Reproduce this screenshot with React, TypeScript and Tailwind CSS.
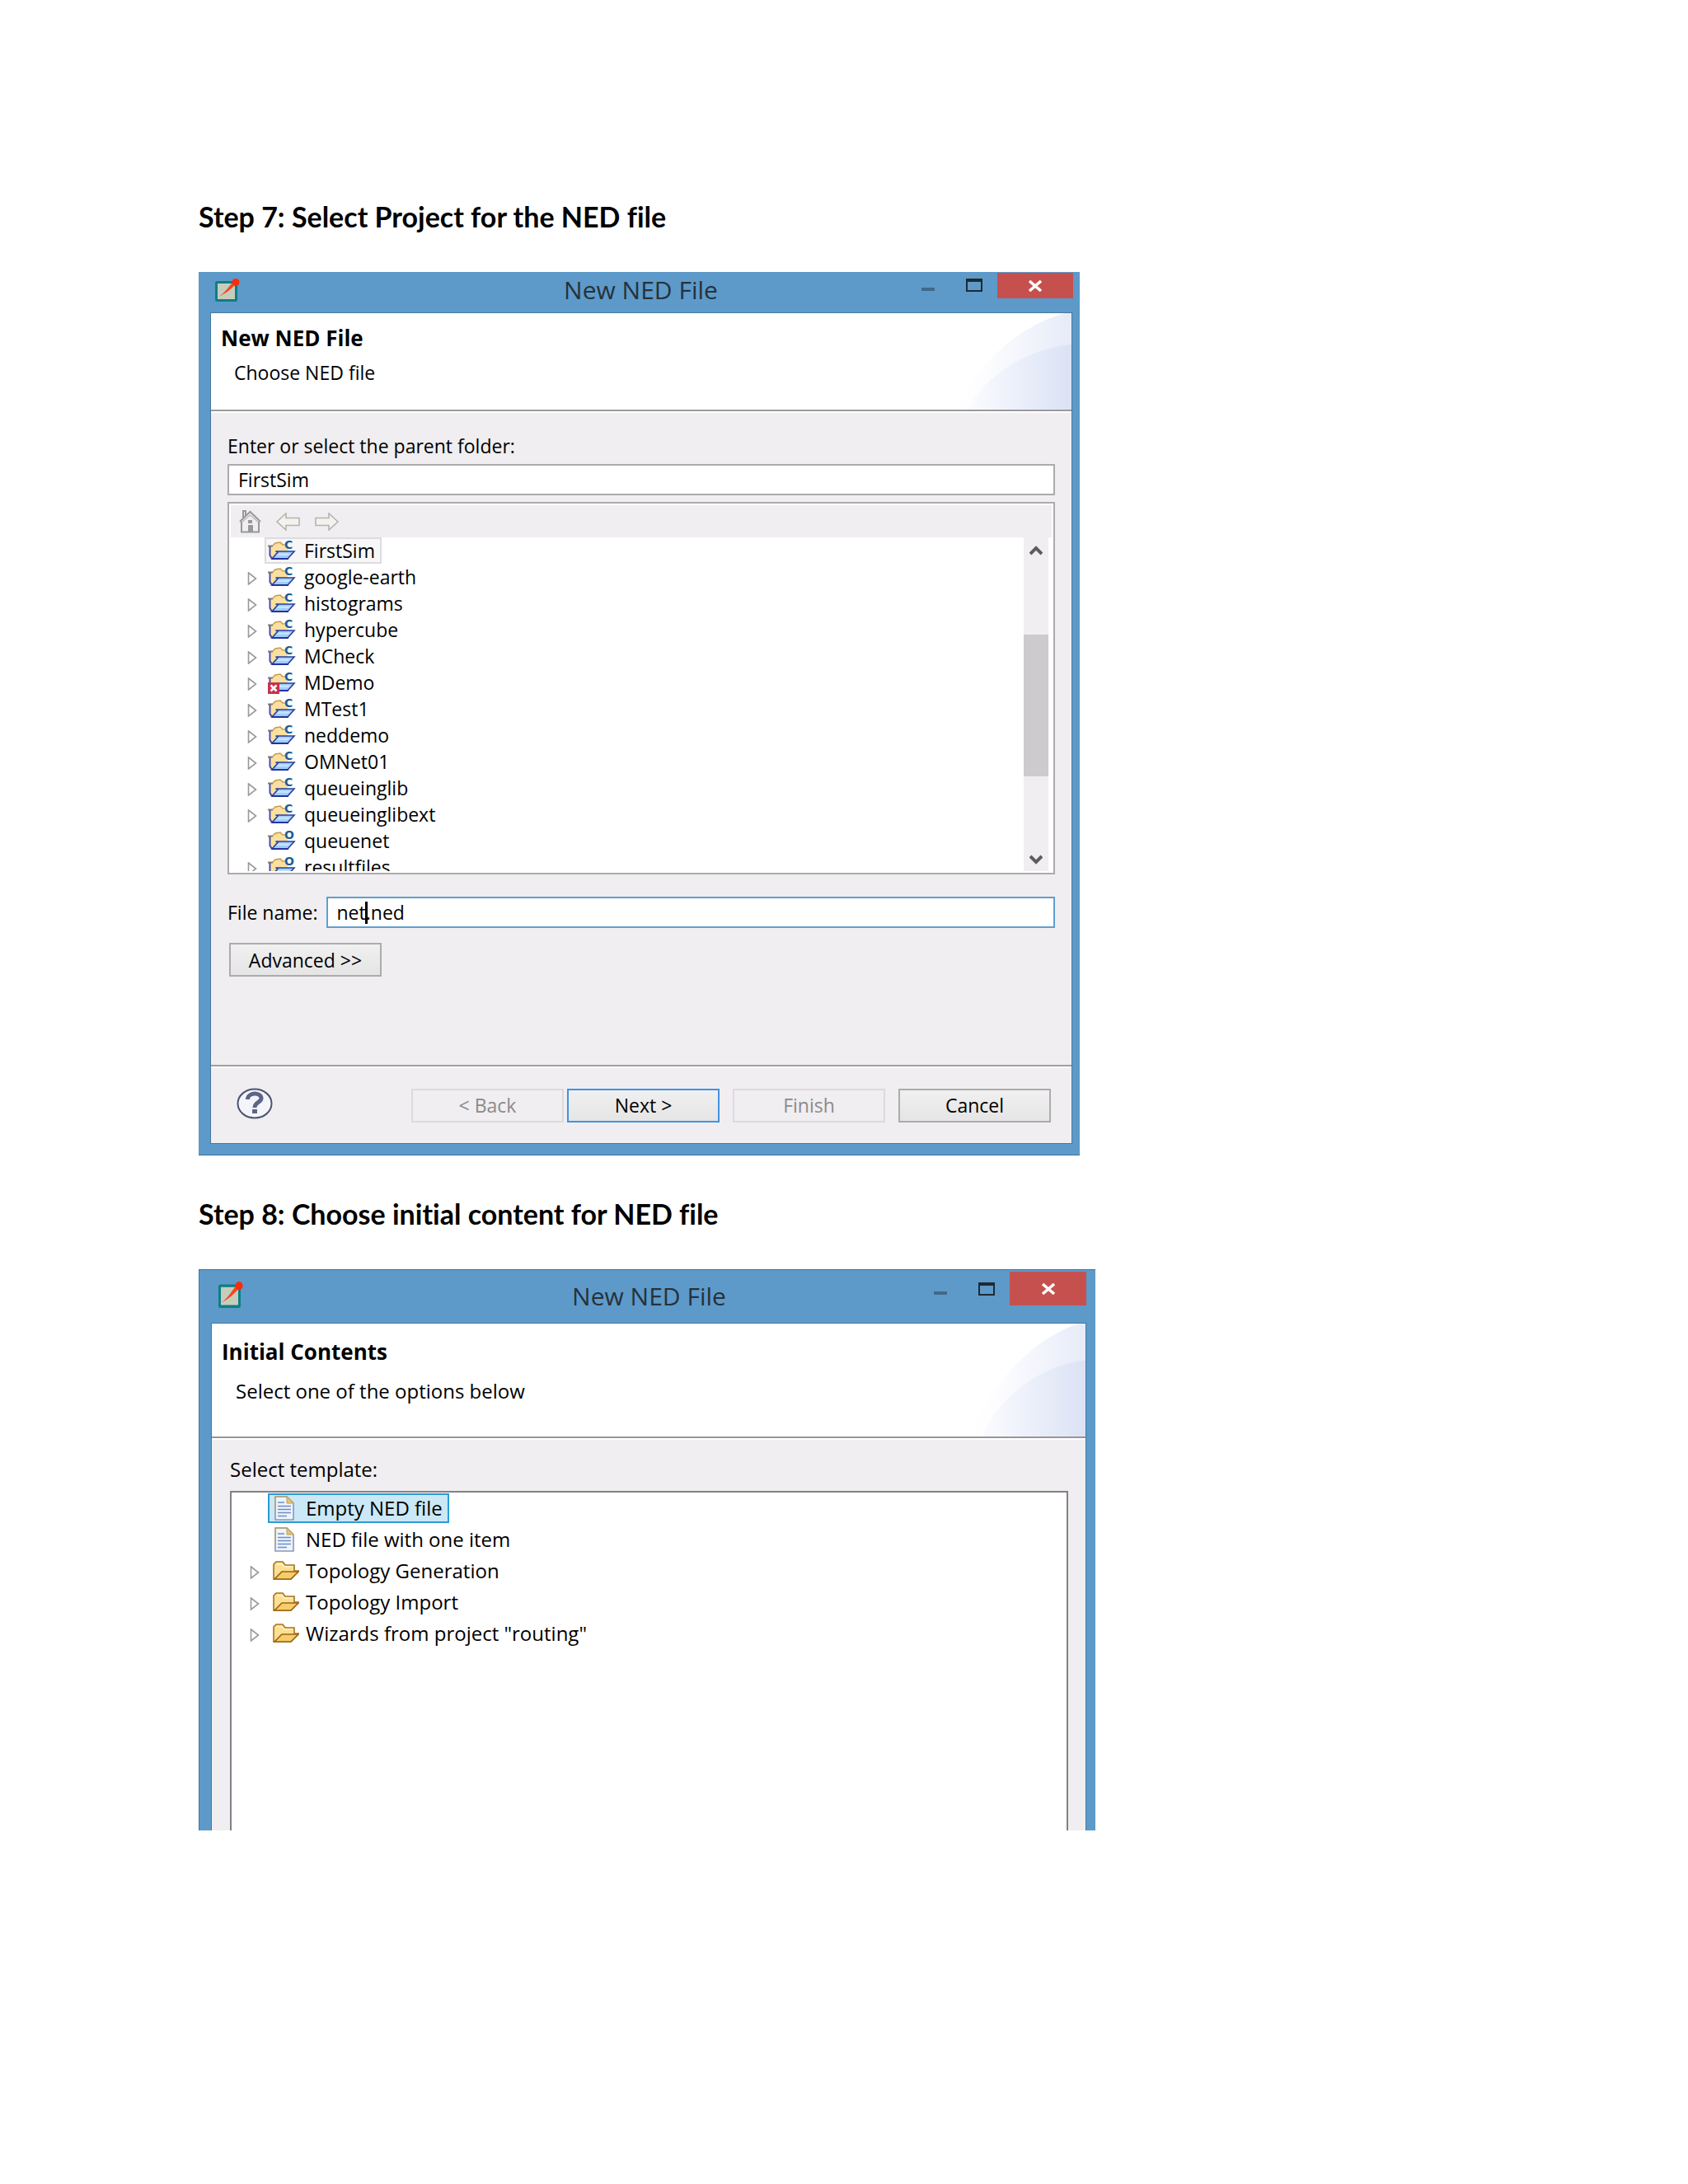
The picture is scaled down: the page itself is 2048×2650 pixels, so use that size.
import React from "react";

function PinIcon({ className }: { className: string }) {
  return (
    <svg className={className} viewBox="0 0 30 28" preserveAspectRatio="none" aria-hidden="true">
      <rect x="1.5" y="4.5" width="24" height="22" rx="1" fill="#c6cdbd" stroke="#0d7f84" strokeWidth="3" />
      <path d="M4 22 C11 18 15 12 20 6 L24 8 C19 13 13 18 4 22Z" fill="#f4471f" />
      <circle cx="25" cy="4.500" r="4.500" fill="#fb2a0c" />
    </svg>
  );
}

function HeaderSwoosh({ id }: { id: string }) {
  return (
    <svg className="absolute right-0 top-0 h-full w-[150px]" viewBox="0 0 150 117" preserveAspectRatio="none" aria-hidden="true">
      <defs>
        <linearGradient id={id + "-outer"} x1="0" x2="1" y1="0" y2="0">
          <stop offset="0" stopColor="#ffffff" />
          <stop offset="0.25" stopColor="#fdfdff" />
          <stop offset="0.65" stopColor="#f2f4fc" />
          <stop offset="1" stopColor="#e6ebf8" />
        </linearGradient>
        <linearGradient id={id + "-inner"} x1="0" x2="1" y1="0" y2="0">
          <stop offset="0" stopColor="#fcfcff" />
          <stop offset="0.5" stopColor="#ebeffa" />
          <stop offset="1" stopColor="#dbe2f5" />
        </linearGradient>
      </defs>
      <path d="M8 117 C36 62 86 15 142 0 H150 V117Z" fill={"url(#" + id + "-outer)"} />
      <path d="M24 117 C44 77 95 43 150 38 V117Z" fill={"url(#" + id + "-inner)"} />
    </svg>
  );
}

function ProjectIcon({ letter, error }: { letter: string; error?: boolean }) {
  return (
    <svg className="h-6 w-[34px] shrink-0 overflow-visible" viewBox="0 0 34 24" aria-hidden="true">
      <path d="M4 7 L7 6 L9 3 L16 2 L19 6 L24 7 V14 L10 15 L4 22Z" fill="#fae0a0" />
      <path d="M6 6 L9 3 L15 2 L18 5 H22" fill="none" stroke="#c79a4a" strokeWidth="1.500" />
      <path d="M0 6.500 H6" stroke="#8b7b66" strokeWidth="2" />
      <path d="M2.500 7 V18 L5 22" fill="none" stroke="#4a4a8c" strokeWidth="2" />
      <path d="M9.500 13 H32 L24 22 H5 L12 14Z" fill="#9fcdfb" stroke="#2b3f9e" strokeWidth="1.600" />
      <path d="M13 15.500 H28 L25 18 H10Z" fill="#c7e3ff" />
      <path d="M5 22 H25" stroke="#2433a0" strokeWidth="2" />
      <text x="20" y="10" fill="#1d5d92" fontFamily="DejaVu Sans" fontWeight="700" fontSize="14">
        {letter}
      </text>
      {error && (
        <g>
          <rect x="0" y="12" width="14" height="14" fill="#c8324c" />
          <path d="M3.500 15.500 L10.500 22.500 M10.500 15.500 L3.500 22.500" stroke="#fff" strokeWidth="2.500" />
        </g>
      )}
    </svg>
  );
}

function FolderIcon() {
  return (
    <svg className="h-6 w-8 shrink-0" viewBox="0 0 32 24" aria-hidden="true">
      <path d="M1 22 V4 L4 1 H12 L15 5 H26 V12 H31 L22 22Z" fill="#fbdf92" stroke="#a87320" strokeWidth="1.600" />
      <path d="M2 22 L11 13 H31 L22 22Z" fill="#f6cd6a" stroke="#9a6412" strokeWidth="1.600" />
      <path d="M5 4 H11 L14 7 H24" fill="none" stroke="#fff3c8" strokeWidth="1.500" />
    </svg>
  );
}

function DocIcon() {
  return (
    <svg className="h-[30px] w-6 shrink-0" viewBox="0 0 24 30" aria-hidden="true">
      <path d="M1 1 H15 L23 9 V29 H1Z" fill="#eef4fd" stroke="#8a97b8" strokeWidth="1.600" />
      <path d="M1 20 V1 H15 L23 9" fill="none" stroke="#b9a76c" strokeWidth="1.600" />
      <path d="M15 1 V9 H23Z" fill="#dfc27c" stroke="#c1a255" strokeWidth="1" />
      <path d="M4 8 H12 M4 12.500 H20 M4 16.500 H20 M4 20.500 H20 M4 24.500 H15" stroke="#6d8cc4" strokeWidth="1.600" />
    </svg>
  );
}

function Expander({ open }: { open: boolean }) {
  return (
    <svg className="mt-1 h-4 w-3 shrink-0" viewBox="0 0 12 16" aria-hidden="true">
      {open && <path d="M1.500 1 L10.500 8 L1.500 15Z" fill="#fff" stroke="#9a9a9a" strokeWidth="1.600" />}
    </svg>
  );
}

function TitleBar({ tall }: { tall?: boolean }) {
  const control = tall ? "flex h-[41px] w-14 items-center justify-center" : "flex h-[29px] w-14 items-center justify-center";
  return (
    <div className={tall ? "grid h-16 grid-cols-[1fr_auto_1fr] items-center pl-[23px] pr-[11px]" : "grid h-[49px] grid-cols-[1fr_auto_1fr] items-center pl-5 pr-2"}>
      <PinIcon className={tall ? "mb-1 h-8 w-[30px]" : "mb-1.5 h-7 w-[30px]"} />
      <div className={tall ? "pr-2 text-[30px] leading-8 text-[#27313a]" : "pb-1.5 pr-2 text-[30px] leading-8 text-[#27313a]"}>New NED File</div>
      <div className={tall ? "flex justify-end self-start pt-0.5" : "flex justify-end self-start pt-px"}>
        <button type="button" aria-label="Minimize" className={control}>
          <svg width="20" height="16" aria-hidden="true">
            <rect x="2" y="11" width="16" height="4" fill="#41698a" />
          </svg>
        </button>
        <button type="button" aria-label="Maximize" className={control}>
          <svg width="20" height="16" aria-hidden="true">
            <rect x="1" y="1" width="18" height="14" fill="none" stroke="#1f2a33" strokeWidth="2" />
            <rect x="0" y="0" width="20" height="4" fill="#1f2a33" />
          </svg>
        </button>
        <button type="button" aria-label="Close" className={tall ? "flex h-[41px] w-[93px] items-center justify-center bg-[#c6504e]" : "flex h-[31px] w-[92px] items-center justify-center bg-[#c6504e]"}>
          <svg width="18" height="14" aria-hidden="true">
            <path d="M2 1 L16 13 M16 1 L2 13" stroke="#fff" strokeWidth="3.500" />
          </svg>
        </button>
      </div>
    </div>
  );
}

const projects = [
  { name: "FirstSim", letter: "C", expandable: false, selected: true },
  { name: "google-earth", letter: "C", expandable: true },
  { name: "histograms", letter: "C", expandable: true },
  { name: "hypercube", letter: "C", expandable: true },
  { name: "MCheck", letter: "C", expandable: true },
  { name: "MDemo", letter: "C", expandable: true, error: true },
  { name: "MTest1", letter: "C", expandable: true },
  { name: "neddemo", letter: "C", expandable: true },
  { name: "OMNet01", letter: "C", expandable: true },
  { name: "queueinglib", letter: "C", expandable: true },
  { name: "queueinglibext", letter: "C", expandable: true },
  { name: "queuenet", letter: "O", expandable: false },
  { name: "resultfiles", letter: "O", expandable: true },
];

const templates = [
  { name: "Empty NED file", kind: "doc", selected: true },
  { name: "NED file with one item", kind: "doc" },
  { name: "Topology Generation", kind: "folder" },
  { name: "Topology Import", kind: "folder" },
  { name: 'Wizards from project "routing"', kind: "folder" },
];

function WizardButton({ children, look }: { children: React.ReactNode; look: "normal" | "primary" | "disabled" }) {
  const looks = {
    normal: "h-[41px] w-[185px] border-2 border-[#adabad] bg-linear-to-b from-[#f1f0f1] to-[#e5e5e5]",
    primary: "h-[41px] w-[185px] border-2 border-[#3f93e4] bg-linear-to-b from-[#f1f0f1] to-[#e5e5e5]",
    disabled: "h-[41px] w-[185px] border-2 border-[#dcdadc] bg-[#f0eef0] text-[#8b8a8b]",
  };
  return (
    <button type="button" disabled={look === "disabled"} className={looks[look]}>
      {children}
    </button>
  );
}

function ChooseFileDialog() {
  return (
    <section aria-label="Choose NED file" className="w-full max-w-[1069px] border-b border-[#3d719b] bg-[#5d9ac9] pb-[13px] text-[23px] leading-8">
      <TitleBar />
      <div className="ml-3.5 mr-[9px] border border-[#47799f] bg-[#f0eef0]">
        <header className="relative h-[117px] bg-white pl-3 pt-3">
          <HeaderSwoosh id="choose" />
          <h2 className="text-[26px] font-bold leading-9">New NED File</h2>
          <p className="pl-4 pt-2">Choose NED file</p>
        </header>
        <div className="border-t-2 border-[#9b9a9e] px-5 pt-[26px] shadow-[inset_0_2px_0_#fff]">
          <label htmlFor="parent" className="block">
            Enter or select the parent folder:
          </label>
          <input id="parent" defaultValue="FirstSim" className="mt-1.5 block h-[38px] w-full border-2 border-[#acaaad] bg-white px-[11px]" />
          <div className="mt-2 border-2 border-[#acaaad] bg-white p-0.5">
            <div className="flex h-[39px] items-center gap-[18px] bg-[#f0eef0] pl-2.5">
              <button type="button" aria-label="Home" disabled>
                <svg width="27" height="28" viewBox="0 0 27 28" fill="none" stroke="#98979a" strokeWidth="2" aria-hidden="true">
                  <path d="M1 14 L13.500 2 L26 14" />
                  <path d="M3 15 L13.500 6 L24 15" strokeWidth="1" />
                  <path d="M3 14 V26.500 H24 V14 M5 9 V1 H8 V7" />
                  <rect x="11" y="12" width="5" height="4" fill="#98979a" stroke="none" />
                  <rect x="11" y="18" width="6" height="8" fill="#98979a" stroke="none" />
                </svg>
              </button>
              <button type="button" aria-label="Back" disabled>
                <svg width="29" height="22" viewBox="0 0 29 22" fill="#f3f2ee" stroke="#b5b4ae" strokeWidth="1.600" aria-hidden="true">
                  <path d="M1 11 L12 1 V6.500 H28 V15.500 H12 V21Z" />
                </svg>
              </button>
              <button type="button" aria-label="Forward" disabled>
                <svg width="29" height="22" viewBox="0 0 29 22" fill="#f3f2ee" stroke="#b5b4ae" strokeWidth="1.600" aria-hidden="true">
                  <path d="M28 11 L17 1 V6.500 H1 V15.500 H17 V21Z" />
                </svg>
              </button>
            </div>
            <div className="flex h-[405px] overflow-hidden">
              <ul className="flex-1">
                {projects.map((p) => (
                  <li key={p.name} className="flex h-8 items-center pl-5">
                    <Expander open={p.expandable} />
                    <span
                      className={
                        p.selected
                          ? "ml-[9px] flex h-8 items-center gap-2.5 border-2 border-[#dedcde] bg-[#f8f7f8] pl-0.5 pr-1.5"
                          : "ml-[11px] flex h-8 items-center gap-2.5 pl-0.5"
                      }
                    >
                      <ProjectIcon letter={p.letter} error={p.error} />
                      {p.name}
                    </span>
                  </li>
                ))}
              </ul>
              <div className="mr-1 flex w-[30px] flex-col items-center bg-[#f0eef0] pb-2 pt-2.5">
                <svg width="16" height="12" fill="none" stroke="#5d5b5e" strokeWidth="4" aria-hidden="true">
                  <path d="M1 10 L8 3 L15 10" />
                </svg>
                <div className="mt-24 h-[172px] w-full bg-[#cdcbce]" />
                <svg className="mt-auto" width="16" height="12" fill="none" stroke="#5d5b5e" strokeWidth="4" aria-hidden="true">
                  <path d="M1 2 L8 9 L15 2" />
                </svg>
              </div>
            </div>
          </div>
          <div className="mt-[27px] flex items-center gap-2.5">
            <label htmlFor="file">File name:</label>
            <div className="relative flex-1">
              <input id="file" defaultValue="net.ned" className="block h-[38px] w-full border-2 border-[#5f9fd0] bg-white px-[11px]" />
              <div className="pointer-events-none absolute left-3 top-1.5 flex h-[27px]" aria-hidden="true">
                <span className="invisible">net</span>
                <span className="w-[3px] bg-black" />
              </div>
            </div>
          </div>
          <div className="ml-0.5 mt-[18px]">
            <WizardButton look="normal">Advanced &gt;&gt;</WizardButton>
          </div>
        </div>
        <footer className="mt-[107px] flex items-center border-t-2 border-[#a09ea1] pb-[25px] pl-[31px] pr-[25px] pt-[26px] shadow-[inset_0_2px_0_#fff]">
          <button type="button" aria-label="Help" className="mb-1 mr-auto">
            <svg width="44" height="38" viewBox="0 0 44 38" aria-hidden="true">
              <ellipse cx="22" cy="19" rx="20.500" ry="17.500" fill="#f4f5f9" stroke="#4b5570" strokeWidth="2" />
              <path d="M13.500 14 C13.500 5 30 5 30 12.500 C30 18 22 17 22 24" fill="none" stroke="#5c6589" strokeWidth="5" />
              <rect x="19" y="26" width="6" height="5" fill="#5c6589" />
            </svg>
          </button>
          <WizardButton look="disabled">&lt; Back</WizardButton>
          <div className="ml-1 mr-4 flex">
            <WizardButton look="primary">Next &gt;</WizardButton>
          </div>
          <div className="mr-4 flex">
            <WizardButton look="disabled">Finish</WizardButton>
          </div>
          <WizardButton look="normal">Cancel</WizardButton>
        </footer>
      </div>
    </section>
  );
}

function InitialContentsDialog() {
  return (
    <section aria-label="Initial Contents" className="w-full max-w-[1088px] border-l border-t border-[#3f76a3] bg-[#5d9ac9] text-[24px] leading-8">
      <TitleBar tall />
      <div className="ml-3.5 mr-[11px] border-x border-t border-[#47799f] bg-[#f0eef0]">
        <header className="relative h-[137px] bg-white pl-3 pt-4">
          <HeaderSwoosh id="initial" />
          <h2 className="text-[26px] font-bold leading-9">Initial Contents</h2>
          <p className="pl-[17px] pt-3.5">Select one of the options below</p>
        </header>
        <div className="border-t-2 border-[#97969a] pl-[22px] pr-[21px] pt-[22px] shadow-[inset_0_2px_0_#fff]">
          <div>Select template:</div>
          <ul className="mt-2.5 min-h-[412px] border-x-2 border-t-2 border-[#828084] bg-white">
            {templates.map((t) => (
              <li key={t.name} className="flex h-[38px] items-center pl-[22px]">
                <Expander open={t.kind === "folder"} />
                <span
                  className={
                    t.selected
                      ? "ml-2.5 flex h-9 items-center gap-2 border-2 border-[#2a9bd6] bg-[#cbe8f6] pl-1 pr-1.5"
                      : "ml-3 flex h-9 items-center gap-2 pl-1"
                  }
                >
                  {t.kind === "doc" ? (
                    <span className="flex w-8 pl-0.5">
                      <DocIcon />
                    </span>
                  ) : (
                    <FolderIcon />
                  )}
                  {t.name}
                </span>
              </li>
            ))}
          </ul>
        </div>
      </div>
    </section>
  );
}

export default function App() {
  return (
    <main className="min-h-screen bg-white px-60 pb-24 pt-[240px] font-['Open_Sans',sans-serif] text-black">
      <div className="ml-px">
        <h1 className="font-[Lato,sans-serif] text-[34px] font-bold leading-[46px] [font-variant-ligatures:none]">Step 7: Select Project for the NED file</h1>
        <div className="mt-11">
          <ChooseFileDialog />
        </div>
        <h1 className="mt-12 font-[Lato,sans-serif] text-[34px] font-bold leading-[46px] [font-variant-ligatures:none]">Step 8: Choose initial content for NED file</h1>
        <div className="mt-11">
          <InitialContentsDialog />
        </div>
      </div>
    </main>
  );
}
